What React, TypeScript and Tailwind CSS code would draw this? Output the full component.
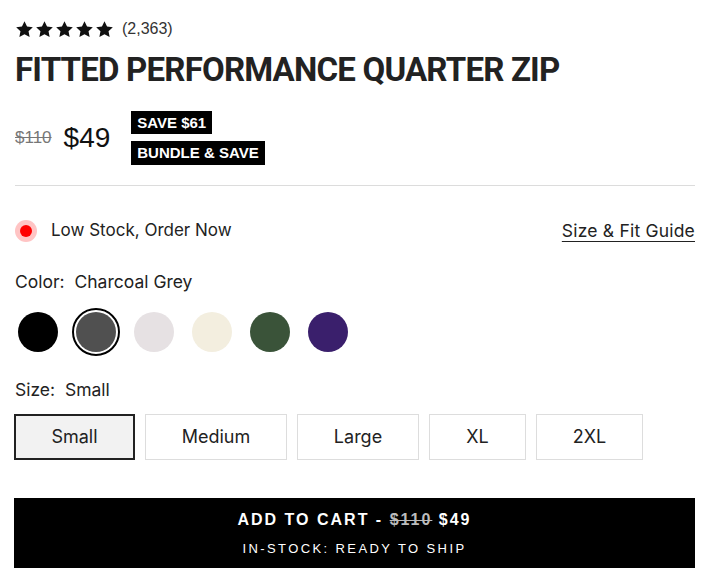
import React from "react";

const Star = () => (
  <svg className="w-[19px] h-[19px]" viewBox="0 0 24 24" fill="#111">
    <path d="M12 1.5l3.2 6.7 7.3.9-5.4 5.1 1.4 7.3L12 18l-6.5 3.5 1.4-7.3-5.4-5.1 7.3-.9z" />
  </svg>
);

const swatches = [
  { name: "Black", color: "bg-[#000000]" },
  { name: "Charcoal Grey", color: "bg-[#505050]", selected: true },
  { name: "Light Grey", color: "bg-[#e6e1e3]" },
  { name: "Cream", color: "bg-[#f3eedf]" },
  { name: "Green", color: "bg-[#3a5339]" },
  { name: "Purple", color: "bg-[#3a1f6c]" },
];

const sizes = [
  { label: "Small", w: "w-[121px]", selected: true },
  { label: "Medium", w: "w-[142px]" },
  { label: "Large", w: "w-[122px]" },
  { label: "XL", w: "w-[97px]" },
  { label: "2XL", w: "w-[107px]" },
];

export default function App() {
  return (
    <div className="w-[720px] h-[578px] bg-white text-[#222] font-['Inter',sans-serif] px-[15px] pt-[19px] overflow-hidden">
      {/* rating */}
      <div className="flex items-center gap-[8px] h-[20px]">
        <div className="flex gap-[1px]">
          <Star />
          <Star />
          <Star />
          <Star />
          <Star />
        </div>
        <span className="text-[16px] font-['Liberation_Sans',sans-serif] text-[#333]">(2,363)</span>
      </div>

      <h1 className="mt-[14px] text-[33px] leading-[34px] font-bold tracking-[-0.8px] font-['Roboto',sans-serif] text-[#222]">
        FITTED PERFORMANCE QUARTER ZIP
      </h1>

      {/* price */}
      <div className="mt-[24px] flex items-center">
        <span className="text-[17px] text-[#777] line-through font-['Liberation_Sans',sans-serif]">$110</span>
        <span className="ml-[12px] text-[28px] text-[#111] font-['Liberation_Sans',sans-serif]">$49</span>
        <div className="ml-[21px] flex flex-col items-start gap-[7px]">
          <span className="bg-black text-white text-[15px] font-bold leading-[23px] px-[6px] font-['Liberation_Sans',sans-serif]">SAVE $61</span>
          <span className="bg-black text-white text-[15px] font-bold leading-[24px] px-[6px] font-['Liberation_Sans',sans-serif]">BUNDLE &amp; SAVE</span>
        </div>
      </div>

      <div className="mt-[20px] h-px bg-[#dcdcdc] mr-[10px]" />

      {/* stock */}
      <div className="mt-[32px] flex items-center justify-between mr-[10px]">
        <div className="flex items-center gap-[14px]">
          <span className="w-[22px] h-[22px] rounded-full bg-[#ffc4c4] flex items-center justify-center">
            <span className="w-[12px] h-[12px] rounded-full bg-[#ff0000]" />
          </span>
          <span className="text-[17px]">Low Stock, Order Now</span>
        </div>
        <a className="text-[17.5px] tracking-[0.2px] underline underline-offset-[4px] decoration-[1px]">Size &amp; Fit Guide</a>
      </div>

      {/* color */}
      <div className="mt-[25px] text-[17.5px]">
        Color:&nbsp; Charcoal Grey
      </div>
      <div className="mt-[12px] flex items-center gap-[10px] ml-[-1px]">
        {swatches.map((s) =>
          s.selected ? (
            <span key={s.name} className="w-[48px] h-[48px] rounded-full border-2 border-black p-[2px] bg-white">
              <span className={`block w-full h-full rounded-full ${s.color}`} />
            </span>
          ) : (
            <span key={s.name} className="w-[48px] h-[48px] flex items-center justify-center">
              <span className={`block w-[40px] h-[40px] rounded-full ${s.color}`} />
            </span>
          )
        )}
      </div>

      {/* size */}
      <div className="mt-[21px] text-[17.5px]">Size:&nbsp; Small</div>
      <div className="mt-[11px] flex gap-[10px] ml-[-1px]">
        {sizes.map((s) => (
          <button
            key={s.label}
            className={`${s.w} h-[46px] text-[18px] ${
              s.selected ? "border-2 border-[#222] bg-[#f2f2f2]" : "border border-[#dddddd] bg-white"
            }`}
          >
            {s.label}
          </button>
        ))}
      </div>

      {/* cart */}
      <button className="mt-[38px] ml-[-1px] w-[681px] h-[70px] bg-black text-white flex flex-col items-center justify-center gap-[7px] font-['Liberation_Sans',sans-serif]">
        <span className="text-[16px] font-bold tracking-[2px]">
          ADD TO CART - <span className="line-through text-[#bbb]">$110</span> $49
        </span>
        <span className="text-[13px] tracking-[2.4px]">IN-STOCK: READY TO SHIP</span>
      </button>
    </div>
  );
}
